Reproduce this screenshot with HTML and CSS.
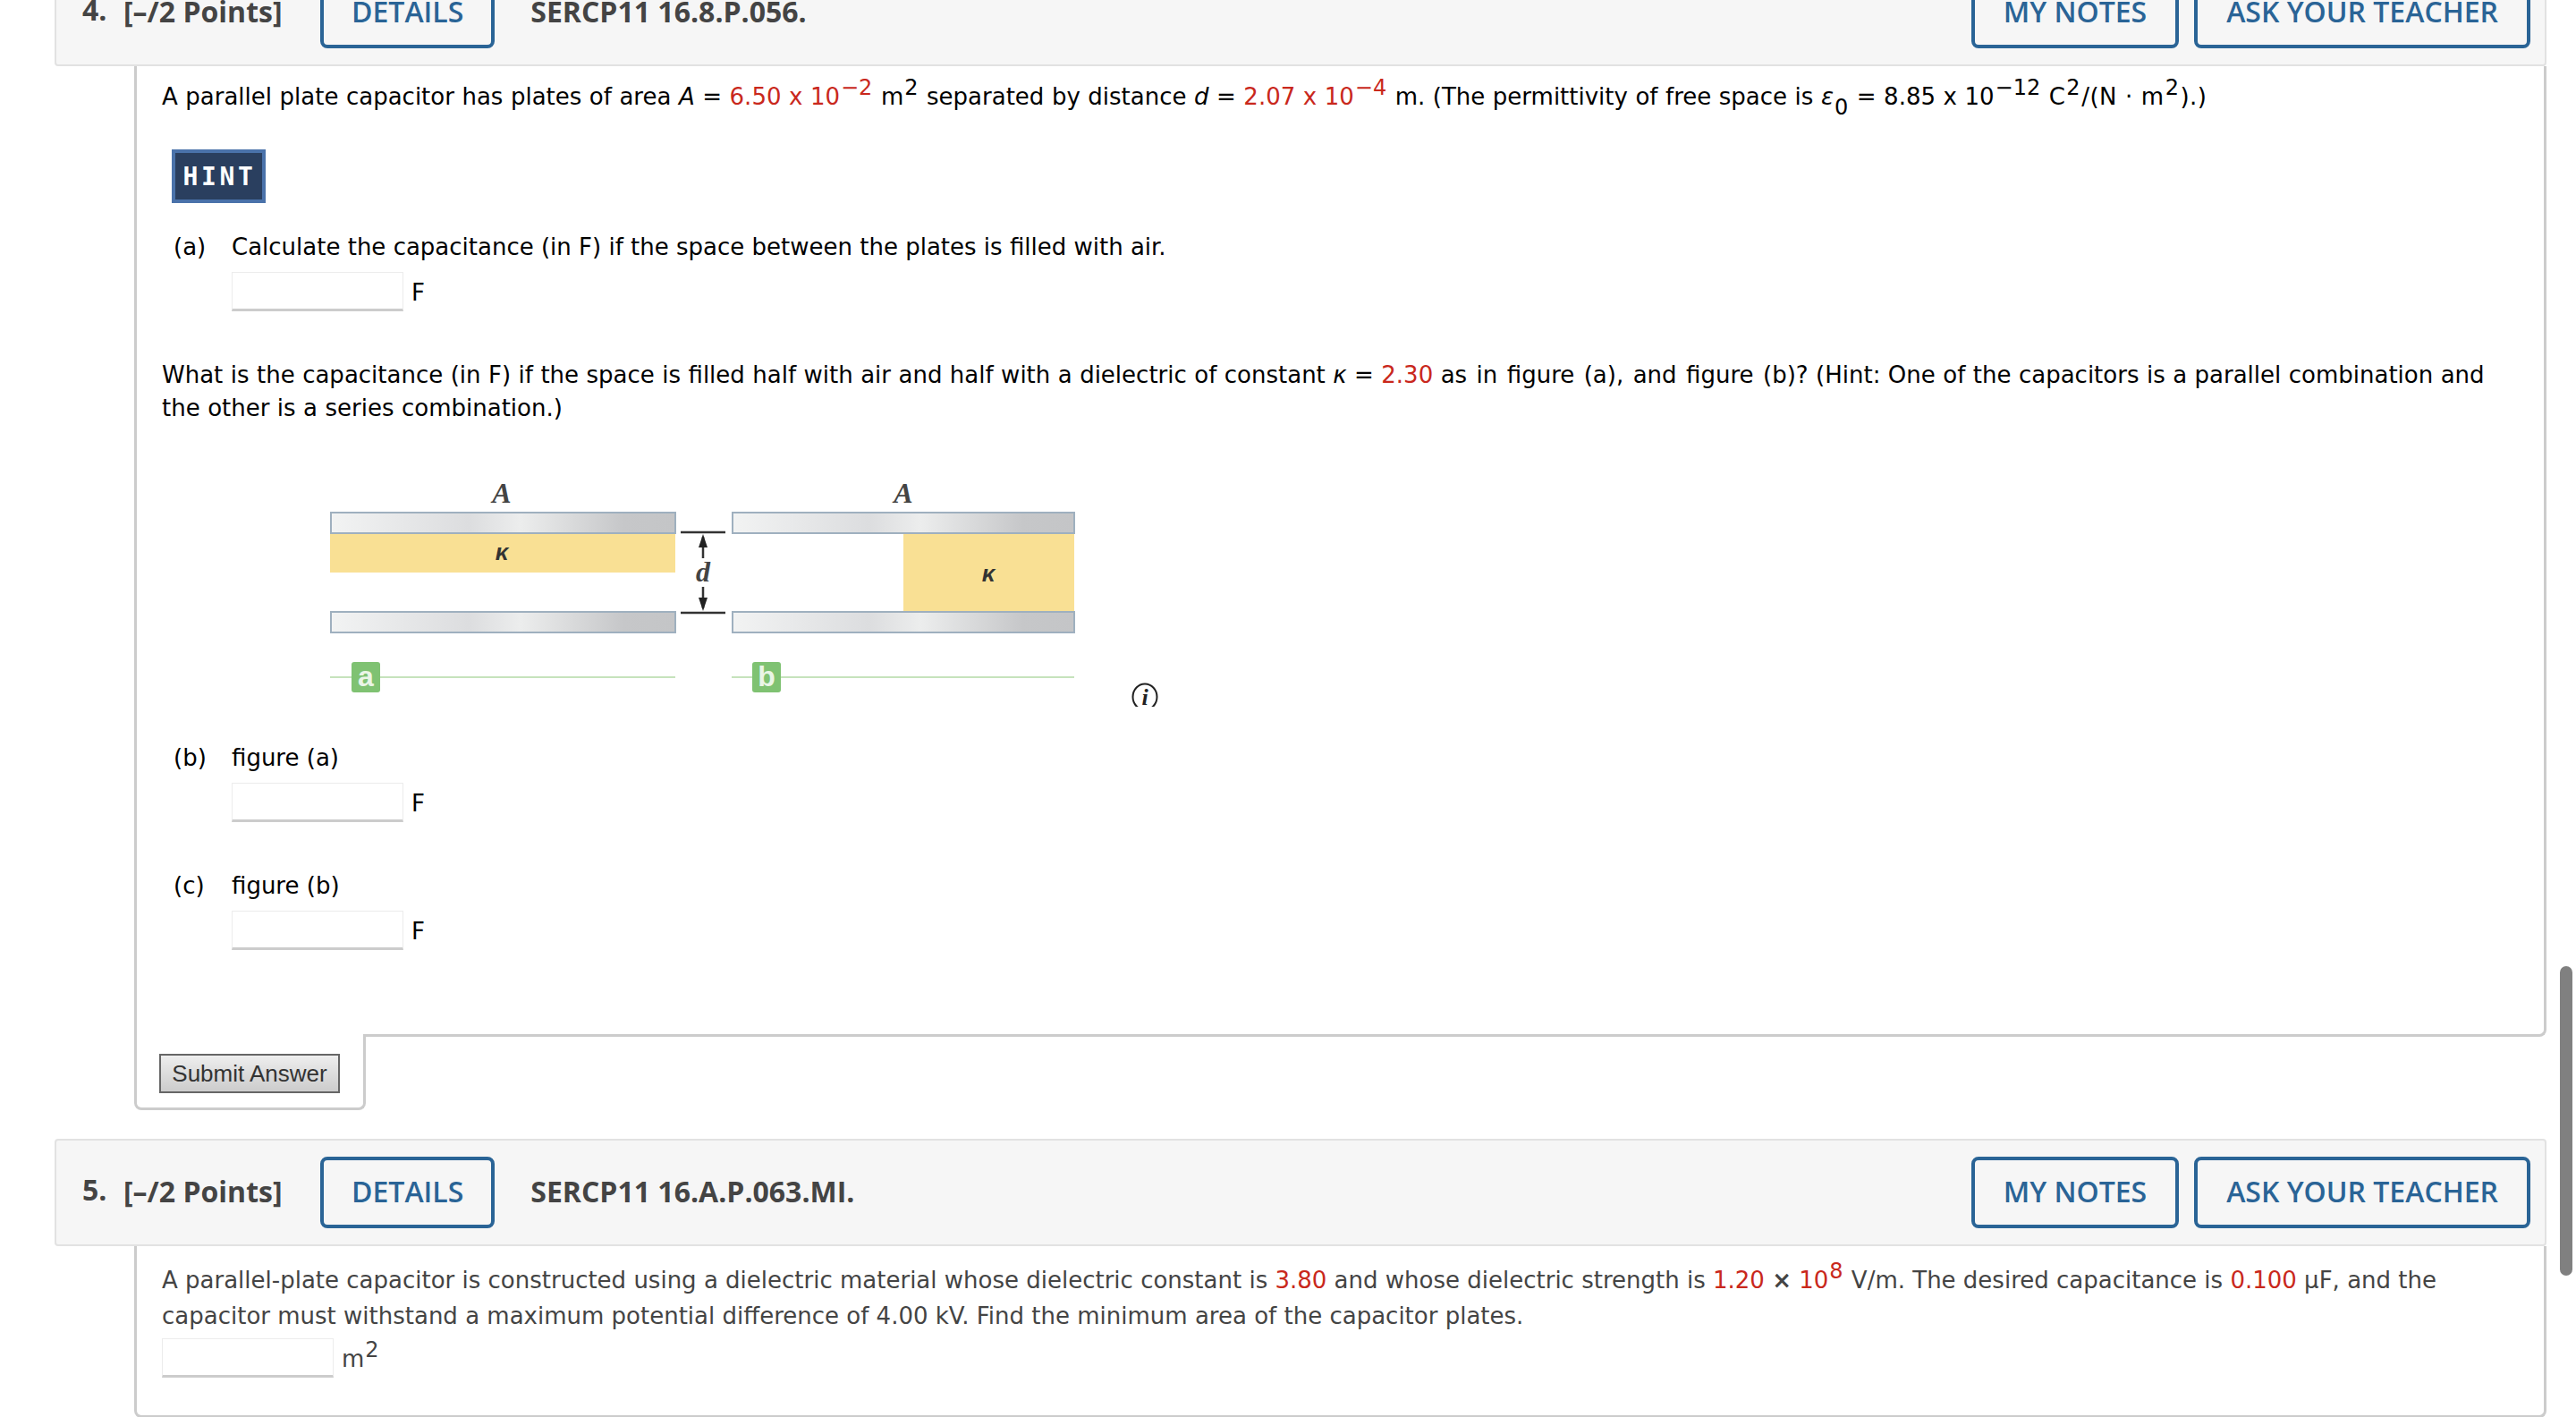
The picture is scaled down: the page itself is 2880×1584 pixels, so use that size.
FILE: index.html
```html
<!DOCTYPE html>
<html lang="en">
<head>
    <meta charset="UTF-8">
    <meta name="viewport" content="width=device-width, initial-scale=1.0">
    <title>Assignment</title>
    <link rel="stylesheet" href="styles.css">
</head>
<body>
<main class="page">
    <section class="question q4">
        <header class="q-head">
            <span class="q-num">4.</span>
            <span class="q-points">[&ndash;/2 Points]</span>
            <button class="head-btn details">DETAILS</button>
            <span class="q-code">SERCP11 16.8.P.056.</span>
            <button class="head-btn notes">MY NOTES</button>
            <button class="head-btn ask">ASK YOUR TEACHER</button>
        </header>
        <div class="q-body">
            <p class="intro">A parallel plate capacitor has plates of area <i>A</i> = <span class="red">6.50 x 10<sup>&minus;2</sup></span> m<sup>2</sup> separated by distance <i>d</i> = <span class="red">2.07 x 10<sup>&minus;4</sup></span> m. (The permittivity of free space is <i>&epsilon;</i><sub>0</sub> = 8.85 x 10<sup>&minus;12</sup> <span class="unit">C<sup>2</sup>/(N &middot; m<sup>2</sup>).)</span></p>
            <button class="hint">HINT</button>
            <div class="part part-a"><span class="part-label">(a)</span><span>Calculate the capacitance (in F) if the space between the plates is filled with air.</span></div>
            <div class="answer"><input class="answer-box" type="text"><span>F</span></div>
            <p class="followup">What is the capacitance (in F) if the space is filled half with air and half with a dielectric of constant <i>&kappa;</i> = <span class="red">2.30</span> <span class="fig-ref">as in figure (a), and figure (b)?</span> (Hint: One of the capacitors is a parallel combination and<br>the other is a series combination.)</p>
            <svg class="figure" width="960" height="260" viewBox="340 530 960 260">
                <defs>
                    <linearGradient id="plate" x1="0" x2="1" y1="0" y2="0">
                        <stop offset="0" stop-color="#f2f3f3"/>
                        <stop offset="0.4" stop-color="#dcdddf"/>
                        <stop offset="0.55" stop-color="#eceded"/>
                        <stop offset="0.85" stop-color="#c6c7c9"/>
                        <stop offset="1" stop-color="#c4c5c7"/>
                    </linearGradient>
                </defs>
                <g class="fig-art">
                    <rect x="369" y="596" width="386" height="44" fill="#f9e094"/>
                    <rect x="1010" y="596" width="191" height="87" fill="#f9e094"/>
                    <rect class="plate" x="370" y="573" width="385" height="23"/>
                    <rect class="plate" x="370" y="684" width="385" height="23"/>
                    <rect class="plate" x="819" y="573" width="382" height="23"/>
                    <rect class="plate" x="819" y="684" width="382" height="23"/>
                    <path class="dim" d="M761 595H811M761 685H811M786 600V624M786 656V680"/>
                    <path class="dim-head" d="M786 597L781 612H791ZM786 683L781 668H791Z"/>
                    <path class="green-line" d="M369 757H755M818 757H1201"/>
                    <rect class="badge" x="393" y="740" width="32" height="34" rx="3"/>
                    <rect class="badge" x="841" y="740" width="32" height="34" rx="3"/>
                </g>
                <text class="fig-serif" x="561" y="562" text-anchor="middle">A</text>
                <text class="fig-serif" x="1010" y="562" text-anchor="middle">A</text>
                <text class="fig-serif" x="786" y="650" text-anchor="middle">d</text>
                <text class="fig-kappa" x="561" y="626" text-anchor="middle">&kappa;</text>
                <text class="fig-kappa" x="1105" y="650" text-anchor="middle">&kappa;</text>
                <text class="fig-badge" x="409" y="767" text-anchor="middle">a</text>
                <text class="fig-badge" x="857" y="767" text-anchor="middle">b</text>
                <ellipse class="info" cx="1280" cy="779" rx="13.5" ry="14.5"/>
                <text class="fig-info" x="1280" y="788" text-anchor="middle">i</text>
            </svg>
            <div class="part part-b"><span class="part-label">(b)</span><span>figure (a)</span></div>
            <div class="answer"><input class="answer-box" type="text"><span>F</span></div>
            <div class="part part-c"><span class="part-label">(c)</span><span>figure (b)</span></div>
            <div class="answer"><input class="answer-box" type="text"><span>F</span></div>
        </div>
        <div class="submit-tab"><button class="submit">Submit Answer</button></div>
    </section>

    <section class="question q5">
        <header class="q-head">
            <span class="q-num">5.</span>
            <span class="q-points">[&ndash;/2 Points]</span>
            <button class="head-btn details">DETAILS</button>
            <span class="q-code">SERCP11 16.A.P.063.MI.</span>
            <button class="head-btn notes">MY NOTES</button>
            <button class="head-btn ask">ASK YOUR TEACHER</button>
        </header>
        <div class="q-body">
            <p class="intro">A parallel-plate capacitor is constructed using a dielectric material whose dielectric constant is <span class="red">3.80</span> and whose dielectric strength is <span class="red">1.20</span> <b class="times">&times;</b> <span class="red">10<sup>8</sup></span> V/m. The desired capacitance is <span class="red">0.100</span> &mu;F, and the<br>capacitor must withstand a maximum potential difference of 4.00 kV. Find the minimum area of the capacitor plates.</p>
            <div class="answer"><input class="answer-box" type="text"><span>m<sup>2</sup></span></div>
        </div>
    </section>
</main>
<div class="scroll-thumb"></div>
</body>
</html>
```

FILE: styles.css
```css
*{
    margin: 0;
    padding: 0;
    box-sizing: border-box;
}
html, body{
    height: 100%;
    overflow: hidden;
}
body{
    background-color: #fff;
    font-family: "DejaVu Sans", sans-serif;
    font-size: 26px;
    color: #000;
}
.page{
    margin-top: -46px;
    padding: 0 33px 0 61px;
}
.q-head{
    height: 120px;
    display: flex;
    align-items: center;
    padding: 0 14px 0 29px;
    background-color: #f6f6f6;
    border: 2px solid #e2e2e2;
    border-radius: 4px;
    font-family: "Open Sans", sans-serif;
    font-size: 32px;
    font-weight: 700;
    color: #444;
}
.q-num{
    width: 46px;
    margin-top: -7px;
}
.q-points, .q-code{
    margin-top: -3px;
}
.q-points{
    width: 220px;
}
.q-code{
    margin-left: 40px;
    margin-right: auto;
}
.head-btn{
    height: 80px;
    padding: 0 32px 3px;
    background-color: transparent;
    border: 4px solid #2a6496;
    border-radius: 8px;
    font-family: inherit;
    font-size: 32px;
    font-weight: 600;
    color: #2a6496;
}
.details{
    padding: 0 31px 3px;
}
.ask{
    margin-left: 17px;
    margin-right: 2px;
}
.q-body{
    margin-left: 89px;
    padding: 16px 0 0 28px;
    border-left: 3px solid #ccc;
    border-right: 3px solid #ccc;
    border-bottom: 3px solid #ccc;
    border-bottom-right-radius: 8px;
    line-height: 37px;
}
.q4 .q-body{
    height: 1085px;
}
.q4 .intro{
    word-spacing: 0.26px;
}
.q5 .q-body{
    height: 192px;
    border-bottom-left-radius: 8px;
    line-height: 40px;
    color: #444;
    padding-top: 18px;
}
.red{
    color: #c9281c;
}
sup, sub{
    line-height: 0;
    font-size: 24px;
    margin: 0 1px;
}
sup{
    vertical-align: 11px;
}
sub{
    vertical-align: -11px;
}
.unit{
    letter-spacing: 0.5px;
}
.times{
    font-weight: 700;
}
.hint{
    display: block;
    width: 105px;
    height: 60px;
    margin: 40px 0 0 11px;
    padding: 0 0 0 2px;
    background-color: #2a3f5f;
    border: 4px solid #4a72aa;
    font-family: "DejaVu Sans Mono", monospace;
    font-size: 28px;
    font-weight: 700;
    letter-spacing: 3.6px;
    color: #fff;
}
.part{
    display: flex;
    margin-left: 13px;
}
.part-label{
    width: 65px;
}
.part-a{
    margin-top: 31px;
}
.part-b{
    margin-top: 39px;
}
.part-c{
    margin-top: 53px;
}
.answer{
    display: flex;
    align-items: center;
    gap: 9px;
    margin: 9px 0 0 78px;
}
.answer span{
    padding-top: 2px;
}
.answer-box{
    width: 192px;
    height: 44px;
    background-color: #fff;
    border: 1px solid #ececec;
    border-bottom: 3px solid #ccc;
}
.q5 .answer{
    margin: 5px 0 0 0;
}
.followup{
    margin-top: 53px;
    word-spacing: 0.2px;
}
.fig-ref{
    word-spacing: 2.2px;
}
.figure{
    display: block;
    margin: 55px 0 0 159px;
}
.fig-art{
    filter: blur(0.6px);
}
.plate{
    fill: url(#plate);
    stroke: #9fb0bf;
    stroke-width: 2;
}
.dim{
    fill: none;
    stroke: #333;
    stroke-width: 2.5;
}
.dim-head{
    fill: #222;
}
.green-line{
    stroke: #c6e3bc;
    stroke-width: 2;
}
.badge{
    fill: #7fc272;
}
.fig-serif{
    font-family: "Liberation Serif", serif;
    font-style: italic;
    font-weight: 700;
    font-size: 32px;
    fill: #444;
}
.fig-kappa{
    font-family: "Liberation Sans", sans-serif;
    font-style: italic;
    font-weight: 700;
    font-size: 26px;
    fill: #333;
}
.fig-badge{
    font-family: "Liberation Sans", sans-serif;
    font-weight: 700;
    font-size: 32px;
    fill: #eaf5e6;
}
.info{
    fill: none;
    stroke: #222;
    stroke-width: 2;
}
.fig-info{
    font-family: "Liberation Serif", serif;
    font-style: italic;
    font-weight: 700;
    font-size: 26px;
    fill: #222;
}
.submit-tab{
    position: relative;
    width: 259px;
    height: 85px;
    margin: -3px 0 32px 89px;
    padding: 22px 0 0 25px;
    background-color: #fff;
    border-left: 3px solid #ccc;
    border-right: 3px solid #ccc;
    border-bottom: 3px solid #ccc;
    border-radius: 0 0 8px 8px;
}
.submit{
    width: 202px;
    height: 44px;
    background: linear-gradient(#eee, #ccc);
    border: 2px solid #666;
    font-family: "Liberation Sans", sans-serif;
    font-size: 26px;
    color: #333;
}
.scroll-thumb{
    position: fixed;
    top: 1080px;
    right: 4px;
    width: 14px;
    height: 346px;
    border-radius: 7px;
    background-color: #808080;
}
```
